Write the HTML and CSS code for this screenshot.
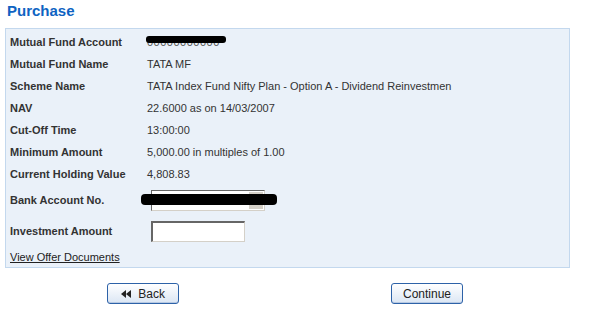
FILE: index.html
```html
<!DOCTYPE html>
<html lang="en">
<head>
    <meta charset="UTF-8">
    <title>Purchase</title>
    <link rel="stylesheet" href="styles.css">
</head>
<body>
    <h1 class="head">Purchase</h1>
    <div class="panel">
        <table class="details">
            <tr>
                <td class="label">Mutual Fund Account</td>
                <td class="value"><span class="masked">00000000000</span></td>
            </tr>
            <tr>
                <td class="label">Mutual Fund Name</td>
                <td class="value">TATA MF</td>
            </tr>
            <tr>
                <td class="label">Scheme Name</td>
                <td class="value">TATA Index Fund Nifty Plan - Option A - Dividend Reinvestmen</td>
            </tr>
            <tr>
                <td class="label">NAV</td>
                <td class="value">22.6000 as on 14/03/2007</td>
            </tr>
            <tr>
                <td class="label">Cut-Off Time</td>
                <td class="value">13:00:00</td>
            </tr>
            <tr>
                <td class="label">Minimum Amount</td>
                <td class="value">5,000.00 in multiples of 1.00</td>
            </tr>
            <tr>
                <td class="label">Current Holding Value</td>
                <td class="value">4,808.83</td>
            </tr>
            <tr class="bank">
                <td class="label">Bank Account No.</td>
                <td class="value">
                    <div class="select">
                        <span class="arrow"></span>
                        <span class="blackout"></span>
                    </div>
                </td>
            </tr>
            <tr class="invest">
                <td class="label">Investment Amount</td>
                <td class="value"><input class="amount" type="text"></td>
            </tr>
            <tr class="docs">
                <td colspan="2"><a href="#" class="link">View Offer Documents</a></td>
            </tr>
        </table>
    </div>
    <div class="actions">
        <button class="btn">
            <svg class="rew" width="10" height="8" viewBox="0 0 10 8">
                <path d="M5 0 L0 4 L5 8 Z M10 0 L5 4 L10 8 Z" fill="#222"/>
            </svg>
            Back
        </button>
        <button class="btn">Continue</button>
    </div>
</body>
</html>
```
FILE: styles.css
```css
body {
    margin: 0;
    font-family: "Liberation Sans", Arial, sans-serif;
    font-size: 11px;
    color: #333;
    background: #fff;
}
.head {
    margin: 0;
    padding: 2px 0 0 7px;
    height: 28px;
    box-sizing: border-box;
    font-size: 15px;
    font-weight: bold;
    color: #0e63c2;
}
.panel {
    margin-left: 5px;
    width: 565px;
    height: 240px;
    padding-top: 2px;
    box-sizing: border-box;
    background-color: #eaf1f9;
    border: 1px solid #c3d8ee;
}
.details {
    border-collapse: collapse;
}
.details td {
    padding: 0;
    height: 22px;
}
.label {
    width: 137px;
    padding-left: 4px !important;
    font-weight: bold;
    color: #333;
}
.value {
    color: #333;
}
.masked {
    position: relative;
    color: #555;
    letter-spacing: 0.5px;
}
.masked::after {
    content: "";
    position: absolute;
    left: -1px;
    right: -6px;
    top: 0;
    height: 7px;
    background: #000;
    border-radius: 3px;
}
.bank td {
    height: 30px;
}
.select {
    position: relative;
    width: 114px;
    height: 21px;
    margin-left: 4px;
    box-sizing: border-box;
    background: #fff;
    border: 1px solid #666;
    border-right-color: #d4d0c8;
    border-bottom-color: #d4d0c8;
}
.arrow {
    position: absolute;
    right: 1px;
    top: 1px;
    width: 14px;
    height: 17px;
    background: #d4d0c8;
    border-left: 1px solid #fff;
}
.blackout {
    position: absolute;
    left: -11px;
    top: 3px;
    width: 136px;
    height: 11px;
    background: #000;
    border-radius: 4px;
}
.invest td {
    height: 32px;
}
.amount {
    width: 94px;
    height: 21px;
    margin: 0 0 0 4px;
    padding: 0;
    box-sizing: border-box;
    background: #fff;
    border: 2px solid #666;
    border-right: 1px solid #d4d0c8;
    border-bottom: 1px solid #d4d0c8;
}
.docs td {
    padding-left: 4px;
    height: 20px;
}
.link {
    color: #222;
    text-decoration: underline;
}
.actions {
    display: flex;
    gap: 212px;
    margin: 15px 0 0 107px;
}
.btn {
    width: 72px;
    height: 21px;
    padding: 0;
    font-family: "Liberation Sans", Arial, sans-serif;
    font-size: 12px;
    color: #222;
    background: linear-gradient(#ffffff, #dbe6f4);
    border: 1px solid #2d62a8;
    border-radius: 3px;
    box-shadow: inset 0 -1px 0 #b7c9e2;
}
.rew {
    margin-right: 4px;
}
```
